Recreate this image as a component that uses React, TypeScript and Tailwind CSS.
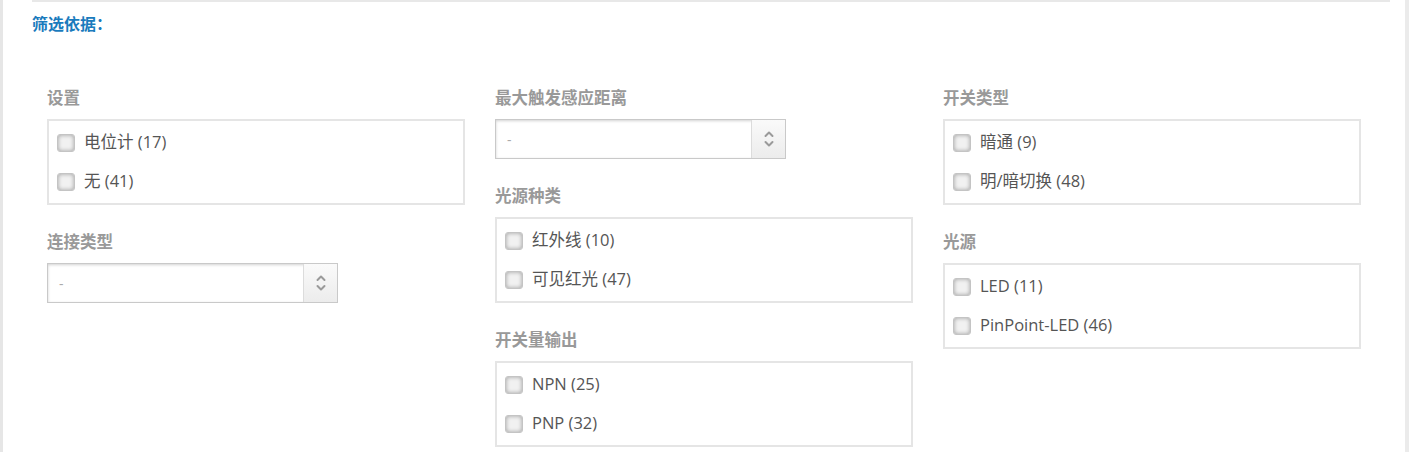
import React from 'react';

type Group =
  | { label: string; kind: 'checks'; items: string[] }
  | { label: string; kind: 'select' };

const columns: Group[][] = [
  [
    { label: '设置', kind: 'checks', items: ['电位计 (17)', '无 (41)'] },
    { label: '连接类型', kind: 'select' },
  ],
  [
    { label: '最大触发感应距离', kind: 'select' },
    { label: '光源种类', kind: 'checks', items: ['红外线 (10)', '可见红光 (47)'] },
    { label: '开关量输出', kind: 'checks', items: ['NPN (25)', 'PNP (32)'] },
  ],
  [
    { label: '开关类型', kind: 'checks', items: ['暗通 (9)', '明/暗切换 (48)'] },
    { label: '光源', kind: 'checks', items: ['LED (11)', 'PinPoint-LED (46)'] },
  ],
];

const font = { fontFamily: '"Open Sans", "Noto Sans CJK SC", sans-serif' };

function CheckRow({ text }: { text: string }) {
  return (
    <label className="flex items-center h-[39px] pl-[8px] cursor-pointer">
      <span className="w-[18px] h-[18px] rounded-[3px] border border-[#c4c4c4] bg-[#f1f1f1] shadow-[inset_0_0_4px_rgba(0,0,0,0.35)]" />
      <span className="ml-[9px] text-[16.5px] text-[#555]">{text}</span>
    </label>
  );
}

function Select() {
  return (
    <div className="flex w-[291px] h-[40px] border border-[#c9c9c9] bg-white shadow-[inset_0_1px_3px_rgba(0,0,0,0.18)]">
      <div className="flex-1 flex items-center pl-[11px] text-[14px] text-[#aaa]">-</div>
      <div className="w-[34px] flex items-center justify-center border-l border-[#dcdcdc] bg-gradient-to-b from-[#fafafa] to-[#ececec]">
        <svg width="12" height="20" viewBox="0 0 12 20" fill="none" stroke="#9a9a9a" strokeWidth="2" strokeLinecap="round" strokeLinejoin="round">
          <path d="M2.5 7 L6 3.5 L9.5 7" />
          <path d="M2.5 13 L6 16.5 L9.5 13" />
        </svg>
      </div>
    </div>
  );
}

export default function App() {
  return (
    <div className="w-[1410px] h-[452px] bg-white flex" style={font}>
      <div className="w-[3px] bg-[#e6e6e6]" />
      <div className="flex-1 pl-[29px] pr-[15px]">
        <div className="h-[2px] bg-[#e8e8e8] w-[1358px]" />
        <div className="mt-[12px] text-[16px] leading-[20px] font-bold text-[#1a7bbd]">筛选依据：</div>
        <div className="grid grid-cols-[418px_418px_418px] gap-x-[30px] pl-[15px] mt-[53px]">
          {columns.map((col, i) => (
            <div key={i} className="flex flex-col">
              {col.map((g) => (
                <div key={g.label} className="mb-[26px]">
                  <div className="text-[16.5px] leading-[22px] font-bold text-[#999] mb-[10px]">{g.label}</div>
                  {g.kind === 'select' ? (
                    <Select />
                  ) : (
                    <div className="border-2 border-[#e5e5e5] py-[2px]">
                      {g.items.map((t) => (
                        <CheckRow key={t} text={t} />
                      ))}
                    </div>
                  )}
                </div>
              ))}
            </div>
          ))}
        </div>
      </div>
      <div className="w-[4px] bg-[#ebebeb] mr-[1px]" />
    </div>
  );
}
